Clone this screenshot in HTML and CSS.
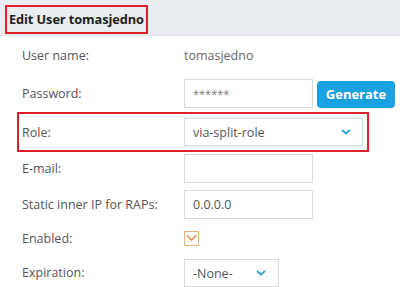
FILE: index.html
```html
<!DOCTYPE html>
<html>
<head>
<meta charset="utf-8">
<link rel="stylesheet" href="styles.css">
</head>
<body>
<div class="header">
  <h1 class="title">Edit User tomasjedno</h1>
</div>
<div class="form">
  <div class="row row-user">
    <span class="label">User name:</span>
    <span class="value">tomasjedno</span>
  </div>
  <div class="row row-pass">
    <span class="label">Password:</span>
    <div class="pass-wrap">
      <div class="input input-pass">******</div>
      <button class="btn">Generate</button>
    </div>
  </div>
  <div class="row row-role">
    <span class="label">Role:</span>
    <div class="select select-role">
      <span>via-split-role</span>
      <svg class="chev" width="10" height="6" viewBox="0 0 10 6"><path d="M1 1l4 3.5L9 1" fill="none" stroke="#2a9fd8" stroke-width="1.8"/></svg>
    </div>
  </div>
  <div class="row row-email">
    <span class="label">E-mail:</span>
    <div class="input"></div>
  </div>
  <div class="row row-ip">
    <span class="label">Static inner IP for RAPs:</span>
    <div class="input">0.0.0.0</div>
  </div>
  <div class="row row-enabled">
    <span class="label">Enabled:</span>
    <span class="checkbox"><svg width="11" height="8" viewBox="0 0 11 8"><path d="M1 1.5l4.5 4.5L10 1.5" fill="none" stroke="#e39a45" stroke-width="1.6"/></svg></span>
  </div>
  <div class="row row-exp">
    <span class="label">Expiration:</span>
    <div class="select select-exp">
      <span>-None-</span>
      <svg class="chev" width="10" height="6" viewBox="0 0 10 6"><path d="M1 1l4 3.5L9 1" fill="none" stroke="#2a9fd8" stroke-width="1.8"/></svg>
    </div>
  </div>
</div>
</body>
</html>
```
FILE: styles.css
```css
html, body {
  margin: 0;
  padding: 0;
  background: #ffffff;
  font-family: "Open Sans", "Noto Sans", sans-serif;
  color: #555;
  overflow: hidden;
}
.header {
  height: 36px;
  background: #e9ecf0;
  border-bottom: 1px solid #e2e5e9;
  padding: 5px 0 0 5px;
  box-sizing: border-box;
}
.title {
  margin: 0;
  display: inline-block;
  border: 2px solid #e0202a;
  height: 29px;
  box-sizing: border-box;
  padding: 0 2px 0 2px;
  font-size: 12.8px;
  font-weight: 700;
  line-height: 25px;
  color: #222;
  letter-spacing: -0.1px;
}
.row {
  display: grid;
  grid-template-columns: 162px auto;
  align-items: center;
  padding-left: 22px;
  font-size: 12.5px;
}
.label { color: #555; }
.value { color: #666; }
.row-user { height: 38px; }
.row-pass { height: 38px; }
.row-role {
  height: 40px;
  margin-left: 17px;
  width: 352px;
  box-sizing: border-box;
  border: 2px solid #e0202a;
  padding-left: 3px;
}
.row-email { height: 33px; }
.row-ip { height: 38px; }
.row-enabled { height: 30px; }
.row-exp { height: 38px; }
.pass-wrap {
  display: flex;
  align-items: center;
  gap: 4px;
}
.input {
  width: 129px;
  height: 29px;
  box-sizing: border-box;
  border: 1px solid #d6d9dd;
  padding: 0 8px;
  line-height: 27px;
  color: #555;
  font-size: 12.5px;
}
.input-pass {
  font-size: 11px;
  color: #777;
}
.btn {
  height: 27px;
  width: 78px;
  margin-top: 2px;
  border: none;
  border-radius: 4px;
  background: #1aa1e1;
  color: #fff;
  font-family: "Open Sans", sans-serif;
  font-weight: 700;
  font-size: 13px;
  padding: 0;
}
.select {
  height: 28px;
  box-sizing: border-box;
  border: 1px solid #d6d9dd;
  display: flex;
  align-items: center;
  justify-content: space-between;
  padding: 0 10px 0 8px;
  color: #555;
}
.select-role { width: 179px; padding-right: 11px; }
.select-exp { width: 95px; padding-right: 12px; margin-top: 2px; }
.checkbox {
  width: 15px;
  height: 15px;
  box-sizing: border-box;
  border: 1px solid #e7b47a;
  display: flex;
  align-items: center;
  justify-content: center;
}
```
